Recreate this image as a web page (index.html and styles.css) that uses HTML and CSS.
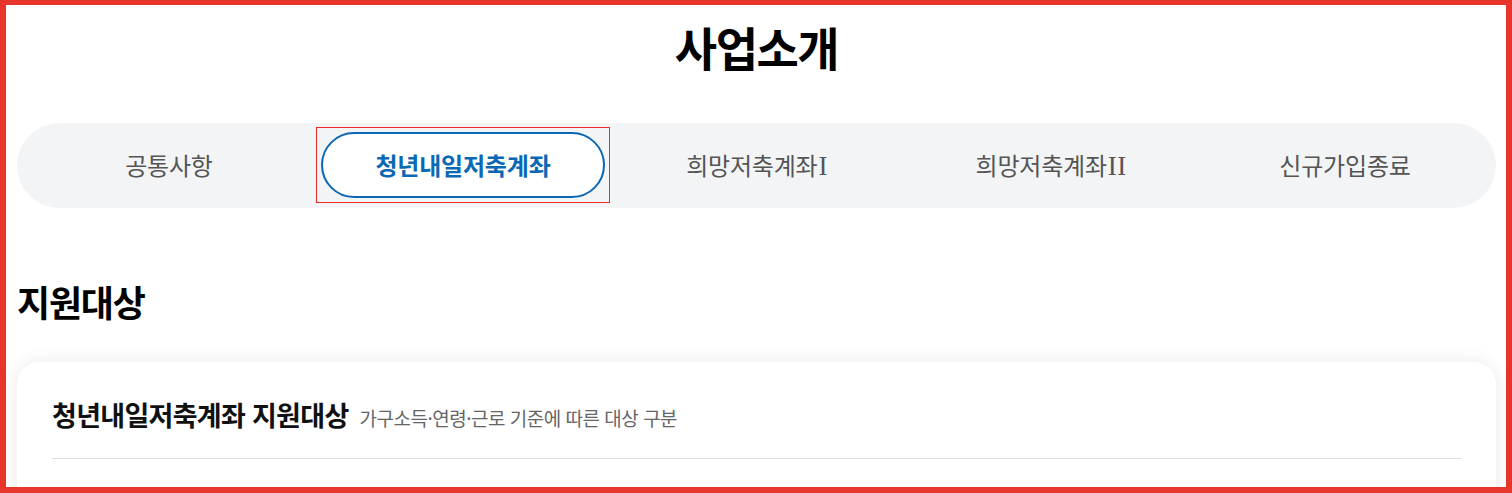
FILE: index.html
```html
<!DOCTYPE html>
<html lang="ko">
<head>
<meta charset="utf-8">
<title>사업소개</title>
<link rel="stylesheet" href="styles.css">
</head>
<body>
<div class="page">
  <h1 class="page-title">사업소개</h1>
  <ul class="tabs">
    <li class="tab"><span class="tab-label">공통사항</span></li>
    <li class="tab is-active"><span class="tab-label">청년내일저축계좌</span></li>
    <li class="tab"><span class="tab-label">희망저축계좌<span class="roman">I</span></span></li>
    <li class="tab"><span class="tab-label">희망저축계좌<span class="roman">II</span></span></li>
    <li class="tab"><span class="tab-label">신규가입종료</span></li>
  </ul>
  <h2 class="section-title">지원대상</h2>
  <section class="card">
    <div class="card-head">
      <h3 class="card-title">청년내일저축계좌 지원대상</h3>
      <span class="card-sub">가구소득·연령·근로 기준에 따른 대상 구분</span>
    </div>
    <div class="divider"></div>
  </section>
</div>
<div class="frame"></div>
</body>
</html>
```

FILE: styles.css
```css
html, body {
  margin: 0;
  padding: 0;
  background: #ffffff;
}

body {
  font-family: "Noto Sans CJK KR", "Noto Sans", sans-serif;
  color: #111;
  overflow: hidden;
}

.page {
  margin: 0 16px 0 17px;
}

.page-title {
  margin: 18px 0 0;
  font-size: 46px;
  line-height: 56px;
  font-weight: 700;
  letter-spacing: -1.5px;
  text-align: center;
  color: #000;
}

.tabs {
  list-style: none;
  margin: 49px 0 0;
  padding: 4px 4px 5px 5px;
  display: grid;
  grid-template-columns: repeat(5, 1fr);
  background: #f3f4f6;
  border-radius: 43px;
  height: 76px;
}

.tab {
  display: flex;
  align-items: center;
  justify-content: center;
  height: 76px;
}

.tab-label {
  font-size: 24px;
  line-height: 30px;
  color: #555;
  letter-spacing: -0.2px;
}

.roman {
  font-family: "Liberation Serif", serif;
  font-size: 27px;
  letter-spacing: 0.3px;
  margin-left: 1px;
}

.tab.is-active {
  outline: 1px solid #ee2a2a;
  outline-offset: -1px;
  padding: 5px;
  box-sizing: border-box;
}

.tab.is-active .tab-label {
  flex: 1;
  height: 100%;
  display: flex;
  align-items: center;
  justify-content: center;
  box-sizing: border-box;
  background: #fff;
  border: 2.5px solid #0b68b5;
  border-radius: 40px;
  color: #0b68b5;
  font-weight: 700;
}

.section-title {
  margin: 69px 0 0;
  font-size: 36px;
  line-height: 48px;
  font-weight: 700;
  letter-spacing: -1.2px;
  color: #000;
}

.card {
  margin-top: 37px;
  background: #fff;
  border-radius: 22px;
  box-shadow: 0 0 18px rgba(0, 0, 0, 0.09);
  padding: 35px 35px 40px;
  min-height: 200px;
}

.card-head {
  display: flex;
  align-items: baseline;
  gap: 11px;
}

.card-title {
  margin: 0;
  font-size: 27px;
  line-height: 36px;
  font-weight: 700;
  letter-spacing: -0.7px;
  color: #111;
}

.card-sub {
  font-size: 19px;
  line-height: 24px;
  color: #666;
  letter-spacing: -0.5px;
}

.divider {
  margin-top: 25px;
  height: 1px;
  background: #dcdcdc;
}

.frame {
  position: fixed;
  inset: 0;
  border: solid #e8352c;
  border-width: 5px 6px 6px 6px;
  pointer-events: none;
}
```
